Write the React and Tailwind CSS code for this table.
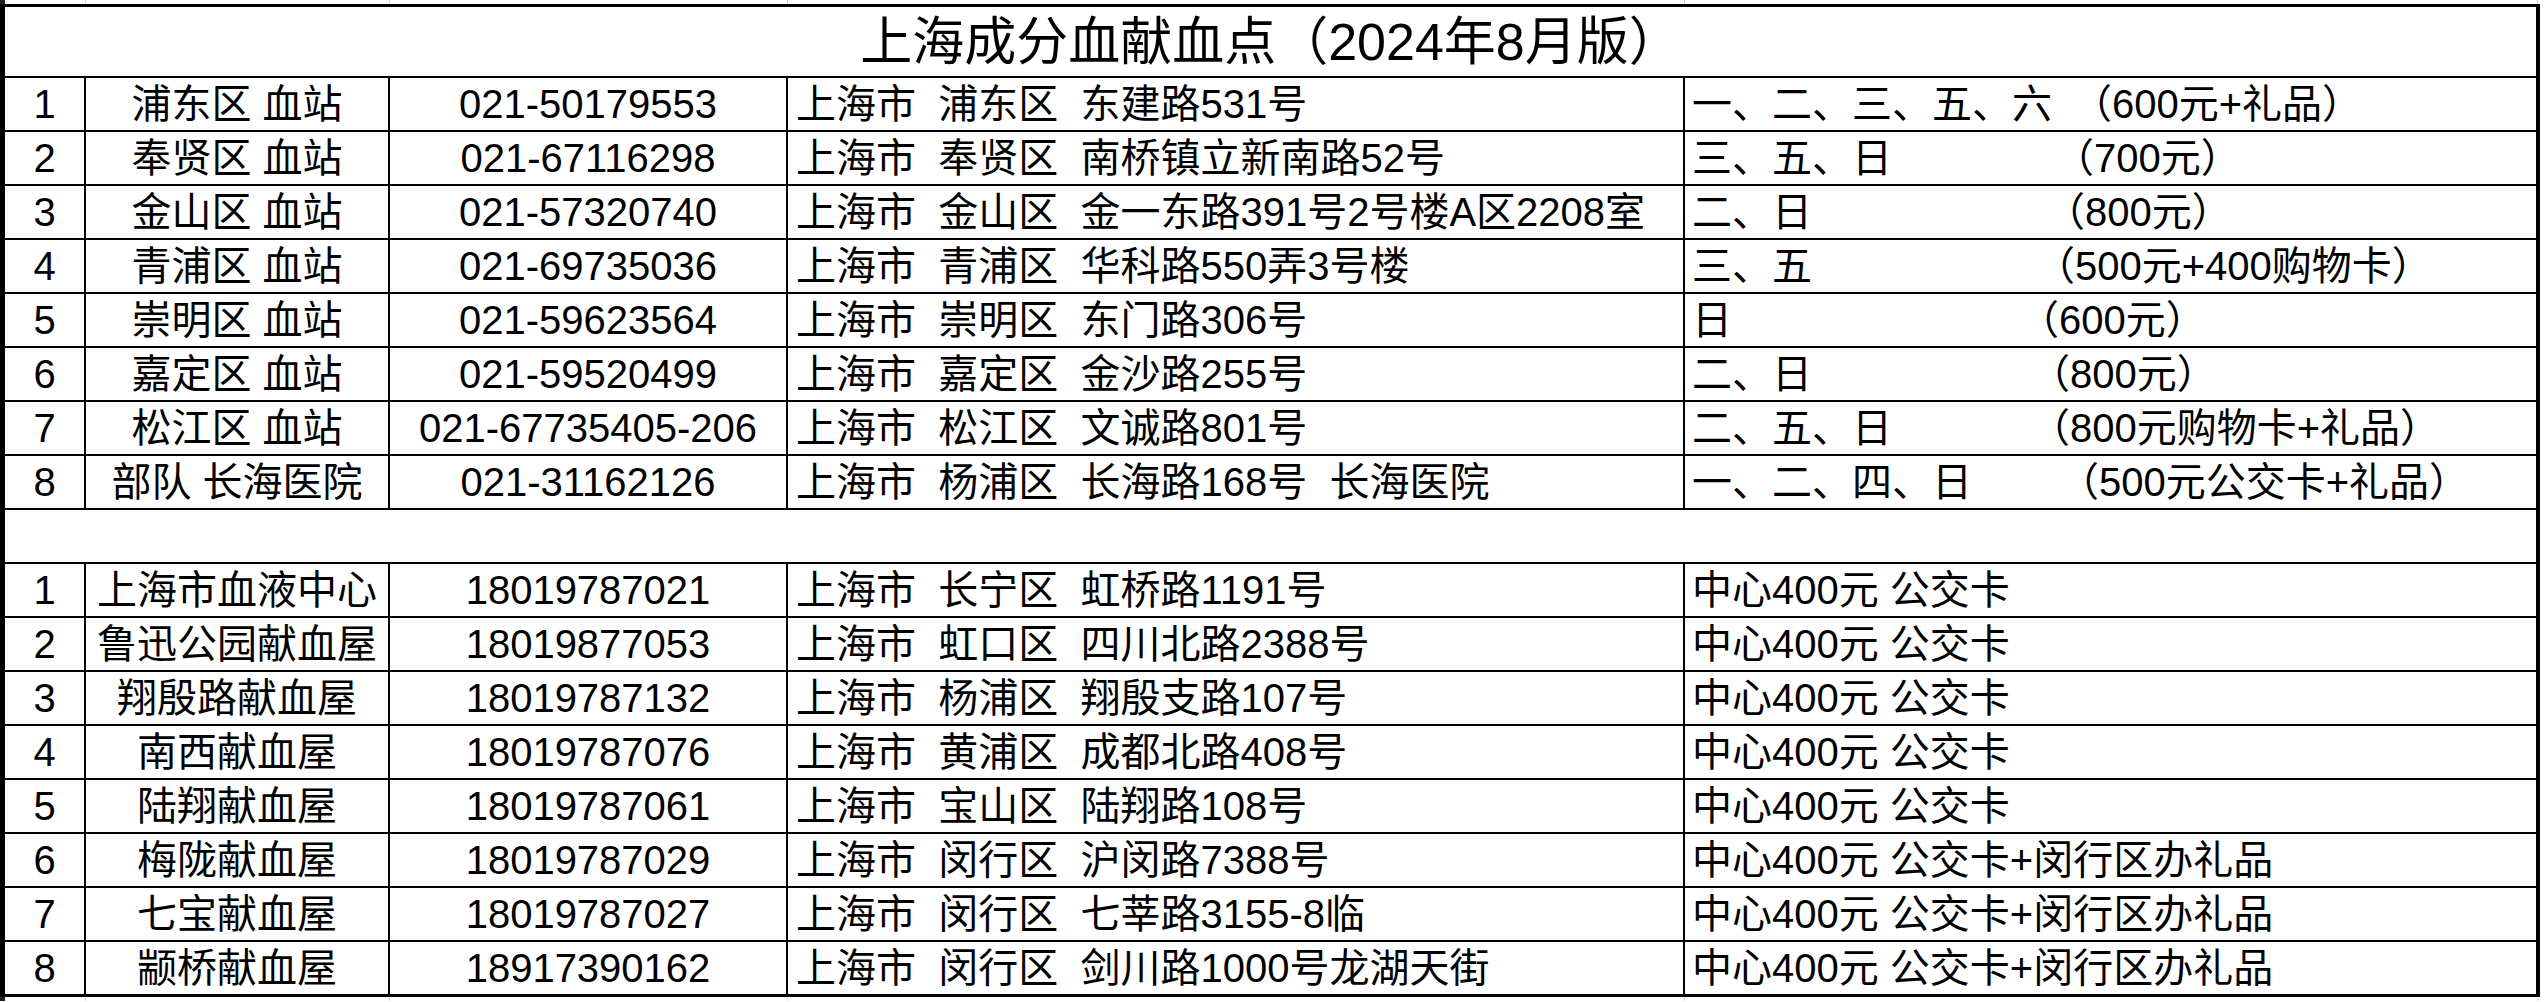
import React from "react";

const top = [
  ["1", "浦东区 血站", "021-50179553", "上海市  浦东区  东建路531号", "一、二、三、五、六", "（600元+礼品）", "w-[380px]"],
  ["2", "奉贤区 血站", "021-67116298", "上海市  奉贤区  南桥镇立新南路52号", "三、五、日", "（700元）", "w-[362px]"],
  ["3", "金山区 血站", "021-57320740", "上海市  金山区  金一东路391号2号楼A区2208室", "二、日", "（800元）", "w-[353px]"],
  ["4", "青浦区 血站", "021-69735036", "上海市  青浦区  华科路550弄3号楼", "三、五", "（500元+400购物卡）", "w-[343px]"],
  ["5", "崇明区 血站", "021-59623564", "上海市  崇明区  东门路306号", "日", "（600元）", "w-[327px]"],
  ["6", "嘉定区 血站", "021-59520499", "上海市  嘉定区  金沙路255号", "二、日", "（800元）", "w-[338px]"],
  ["7", "松江区 血站", "021-67735405-206", "上海市  松江区  文诚路801号", "二、五、日", "（800元购物卡+礼品）", "w-[338px]"],
  ["8", "部队 长海医院", "021-31162126", "上海市  杨浦区  长海路168号  长海医院", "一、二、四、日", "（500元公交卡+礼品）", "w-[367px]"],
];

const bottom = [
  ["1", "上海市血液中心", "18019787021", "上海市  长宁区  虹桥路1191号", "中心400元 公交卡"],
  ["2", "鲁迅公园献血屋", "18019877053", "上海市  虹口区  四川北路2388号", "中心400元 公交卡"],
  ["3", "翔殷路献血屋", "18019787132", "上海市  杨浦区  翔殷支路107号", "中心400元 公交卡"],
  ["4", "南西献血屋", "18019787076", "上海市  黄浦区  成都北路408号", "中心400元 公交卡"],
  ["5", "陆翔献血屋", "18019787061", "上海市  宝山区  陆翔路108号", "中心400元 公交卡"],
  ["6", "梅陇献血屋", "18019787029", "上海市  闵行区  沪闵路7388号", "中心400元 公交卡+闵行区办礼品"],
  ["7", "七宝献血屋", "18019787027", "上海市  闵行区  七莘路3155-8临", "中心400元 公交卡+闵行区办礼品"],
  ["8", "颛桥献血屋", "18917390162", "上海市  闵行区  剑川路1000号龙湖天街", "中心400元 公交卡+闵行区办礼品"],
];

function Row({ cells, last }) {
  const b = last ? "h-[52px]" : "h-[54px] border-b-2";
  return (
    <>
      <div className={`${b} border-r-2 border-black flex items-center justify-center`}>{cells[0]}</div>
      <div className={`${b} border-r-2 border-black flex items-center justify-center whitespace-pre`}>{cells[1]}</div>
      <div className={`${b} border-r-2 border-black flex items-center justify-center whitespace-pre`}>{cells[2]}</div>
      <div className={`${b} border-r-2 border-black flex items-center pl-2 whitespace-pre`}>{cells[3]}</div>
      <div className={`${b} border-black flex items-center pl-[7px] whitespace-pre`}>{cells[4]}</div>
    </>
  );
}

function Strip() {
  return (
    <div className="h-[4px] w-[2544px] flex border-l-[5px] border-[#222]">
      <div className="w-[81px] border-r border-[#d4d4d4]" />
      <div className="w-[304px] border-r border-[#d4d4d4]" />
      <div className="w-[398px] border-r border-[#d4d4d4]" />
      <div className="w-[897px] border-r border-[#d4d4d4]" />
      <div className="w-[853px] border-r border-[#d4d4d4]" />
    </div>
  );
}

export default function App() {
  return (
    <div className="w-[2544px] h-[1002px] bg-white overflow-hidden text-black font-['Liberation_Sans','Noto_Sans_CJK_SC',sans-serif] text-[40px] leading-none">
      <Strip />
      <div className="flex">
        <div className="w-[2540px] border-t-[3px] border-b-[3px] border-l-[5px] border-r-[4px] border-black grid grid-cols-[81px_304px_398px_897px_851px]">
          <div className="col-span-5 h-[71px] border-b-2 border-black flex items-center justify-center text-[52px] whitespace-pre">
            上海成分血献血点（2024年8月版）
          </div>
          {top.map((r) => (
            <Row
              key={"t" + r[0]}
              cells={[
                r[0],
                r[1],
                r[2],
                r[3],
                <span className="flex items-center">
                  <span className={`${r[6]} shrink-0`}>{r[4]}</span>
                  <span>{r[5]}</span>
                </span>,
              ]}
            />
          ))}
          <div className="col-span-5 h-[54px] border-b-2 border-black" />
          {bottom.map((r, i) => (
            <Row key={"b" + r[0]} cells={r} last={i === bottom.length - 1} />
          ))}
        </div>
        <div className="w-[4px] bg-white" />
      </div>
      <Strip />
    </div>
  );
}
